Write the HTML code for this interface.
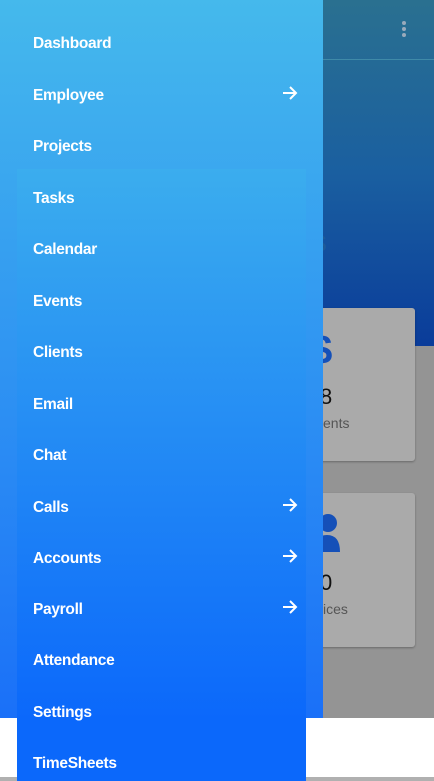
<!DOCTYPE html>
<html><head><meta charset="utf-8"><style>
*{margin:0;padding:0;box-sizing:border-box}
body{width:434px;height:781px;overflow:hidden;position:relative;background:#fff;font-family:"Liberation Sans",sans-serif}
.hdr{position:absolute;left:0;top:0;width:434px;height:346px;background:linear-gradient(#2a7090,#1a5fa0 50%,#0a3c9a)}
.hline{position:absolute;left:0;top:59px;width:434px;height:1px;background:#3f8aa8}
.gray{position:absolute;left:0;top:346px;width:434px;height:372px;background:#949494}
.card{position:absolute;left:280px;width:135px;background:#aaa;border-radius:3px;box-shadow:0 1px 2px rgba(0,0,0,.3)}
.bline{position:absolute;left:0;top:777px;width:434px;height:4px;background:#b0b0b0}
.drawer{position:absolute;left:0;top:0;width:323px;height:718px;background:linear-gradient(#45b9ec,#1a70f8)}
.panel{position:absolute;left:17px;top:169px;width:289px;height:612px;background:linear-gradient(#3badee,#0b68fb 90%);}
.item{position:absolute;left:33px;color:#fff;font-size:15.5px;line-height:20px;font-weight:bold;letter-spacing:-.3px}
.arr{position:absolute;left:282px;width:16px;height:14px}
.dots{position:absolute;left:402px;top:21px;width:4px}
.dots i{display:block;width:4px;height:4px;border-radius:2px;background:#9ab;margin-bottom:2px}
</style></head><body>
<div class="hdr"></div><div class="hline"></div>
<div class="dots"><i></i><i></i><i></i></div>
<div style="position:absolute;left:312px;top:225px;font-size:30px;color:#1e5a98">s</div>
<div class="gray"></div>
<div class="card" style="top:308px;height:153px"></div>
<div class="card" style="top:493px;height:154px"></div>
<div style="position:absolute;left:309px;top:326px;font-size:42px;color:#1550b8;font-weight:bold">$</div>
<div style="position:absolute;left:320px;top:384px;font-size:22px;color:#111">8</div>
<div style="position:absolute;left:323px;top:415px;font-size:14px;color:#555">ents</div>
<div style="position:absolute;left:310px;top:512px;width:30px;height:42px"><svg width="30" height="42" viewBox="0 0 30 42"><circle cx="18" cy="11" r="9" fill="#1550b8"/><path d="M4 40 Q4 23 17 23 Q30 23 30 40Z" fill="#1550b8"/></svg></div>
<div style="position:absolute;left:320px;top:570px;font-size:22px;color:#111">0</div>
<div style="position:absolute;left:323px;top:601px;font-size:14px;color:#555">ices</div>
<div class="bline"></div>
<div class="drawer"></div>
<div class="panel"></div>
<div class="item" style="top:34px">Dashboard</div>
<div class="item" style="top:86px">Employee</div>
<div class="item" style="top:137px">Projects</div>
<div class="item" style="top:189px">Tasks</div>
<div class="item" style="top:240px">Calendar</div>
<div class="item" style="top:292px">Events</div>
<div class="item" style="top:343px">Clients</div>
<div class="item" style="top:395px">Email</div>
<div class="item" style="top:446px">Chat</div>
<div class="item" style="top:498px">Calls</div>
<div class="item" style="top:549px">Accounts</div>
<div class="item" style="top:600px">Payroll</div>
<div class="item" style="top:651px">Attendance</div>
<div class="item" style="top:703px">Settings</div>
<div class="item" style="top:754px">TimeSheets</div>
<svg class="arr" style="top:86px" viewBox="0 0 16 14"><path d="M1 7H14M8 1L14 7L8 13" stroke="#fff" stroke-width="2" fill="none"/></svg>
<svg class="arr" style="top:498px" viewBox="0 0 16 14"><path d="M1 7H14M8 1L14 7L8 13" stroke="#fff" stroke-width="2" fill="none"/></svg>
<svg class="arr" style="top:549px" viewBox="0 0 16 14"><path d="M1 7H14M8 1L14 7L8 13" stroke="#fff" stroke-width="2" fill="none"/></svg>
<svg class="arr" style="top:600px" viewBox="0 0 16 14"><path d="M1 7H14M8 1L14 7L8 13" stroke="#fff" stroke-width="2" fill="none"/></svg>
</body></html>
